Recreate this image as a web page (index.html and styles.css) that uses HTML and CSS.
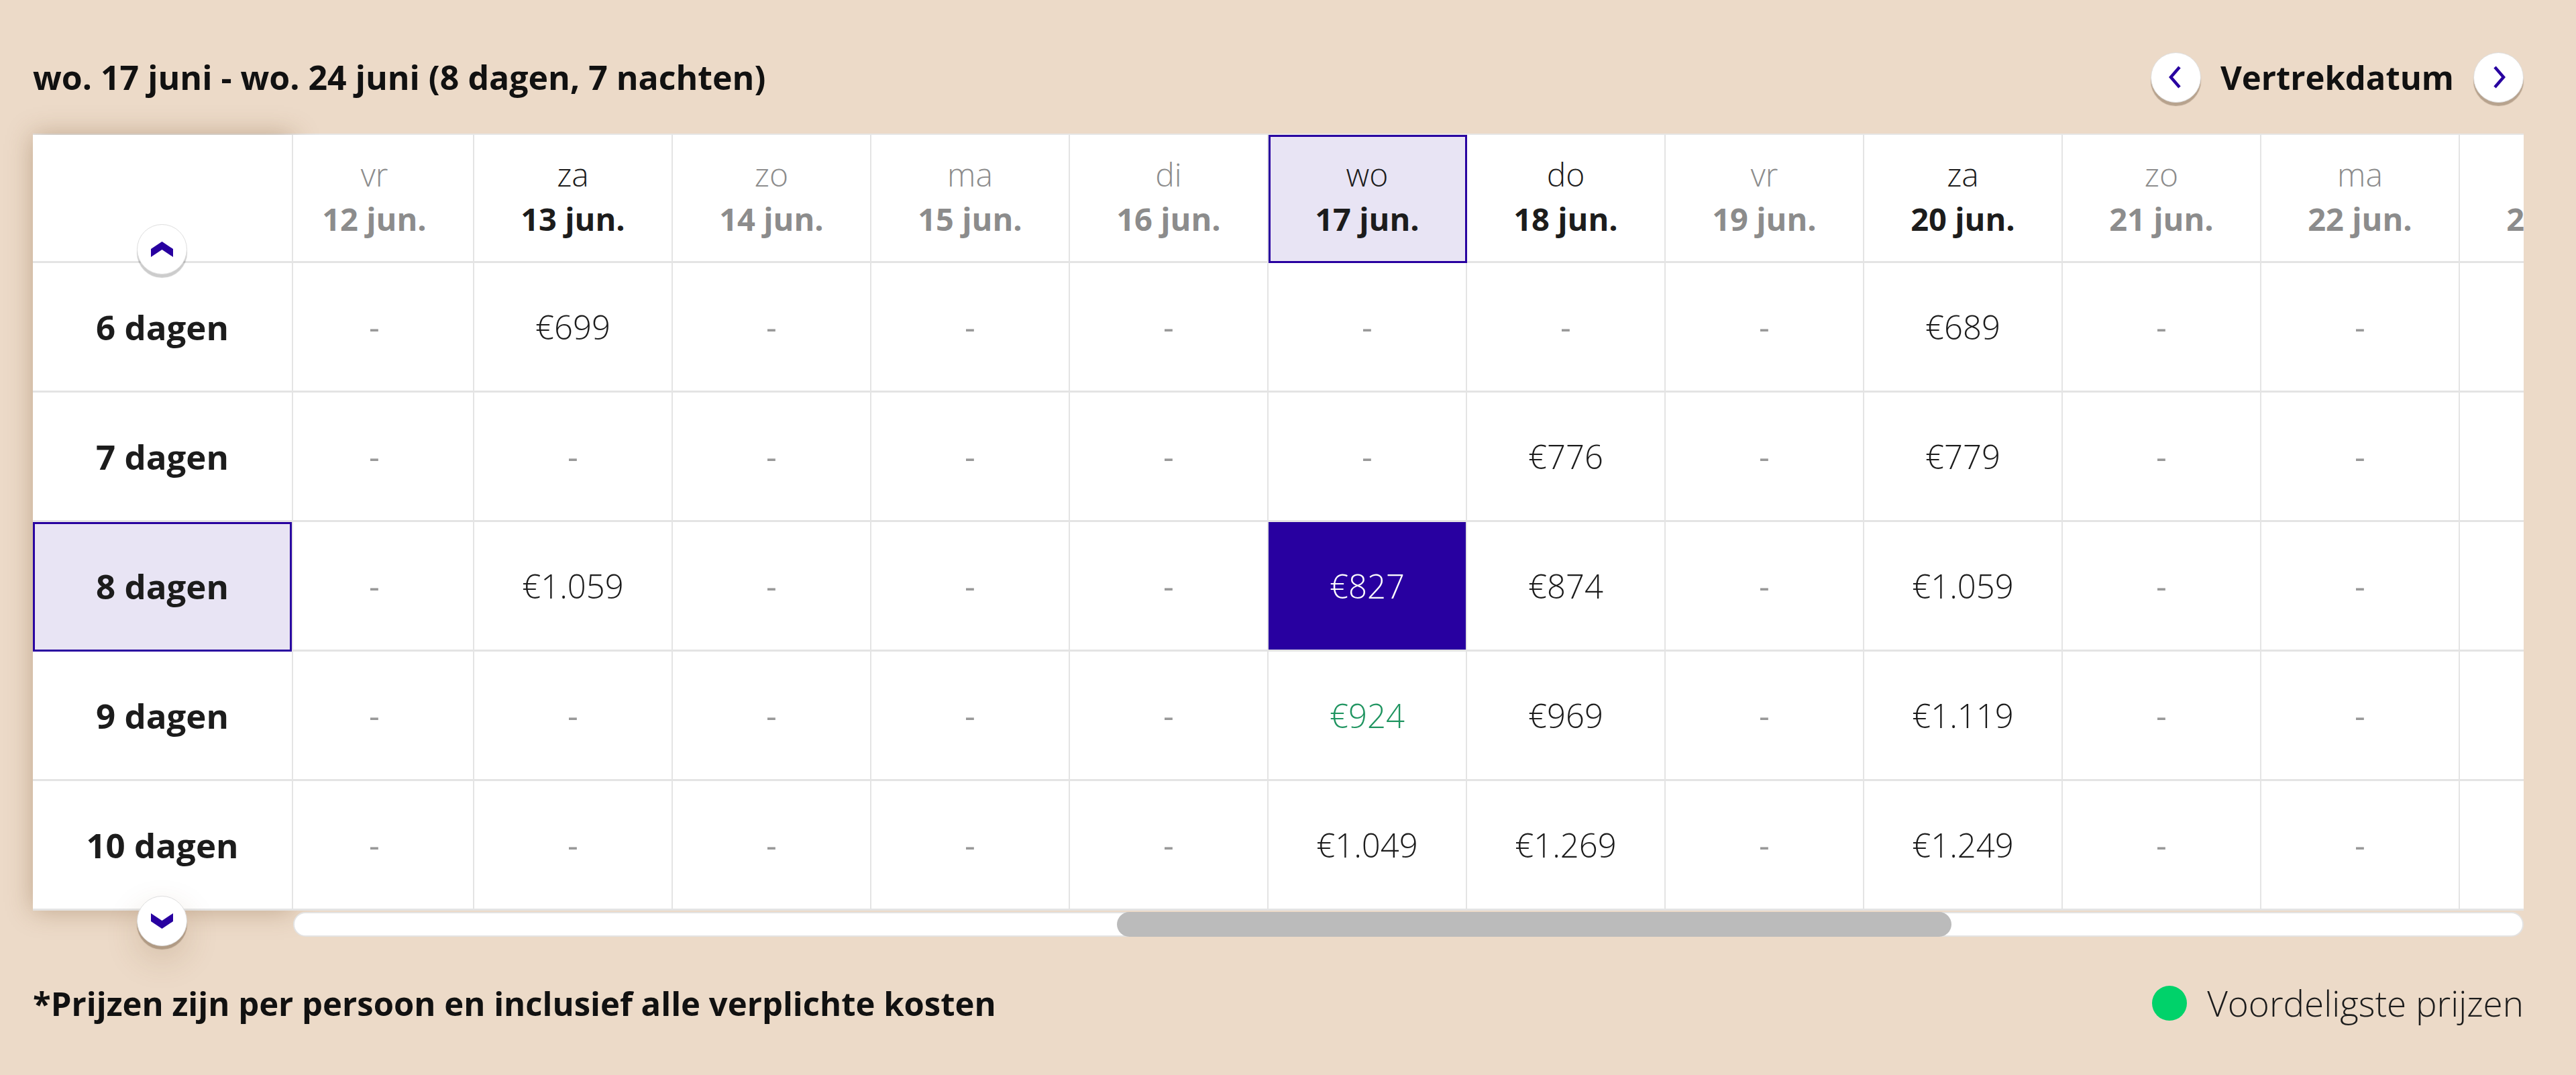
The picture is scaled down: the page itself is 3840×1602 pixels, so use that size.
FILE: index.html
```html
<!DOCTYPE html>
<html>
<head>
	<meta name="viewport" content="width=device-width initial-scale=1">
	<title>Prijsmatrix</title>
	<link rel="stylesheet" href="styles.css">
</head>
<body>
<div class="page">
	<div class="topbar">
		<h2 class="range">wo. 17 juni - wo. 24 juni (8 dagen, 7 nachten)</h2>
		<div class="datenav">
			<button class="roundbtn"><svg width="20" height="34" viewBox="0 0 20 34"><path d="M16 2 L3 17 L16 32" fill="none" stroke="#2800a0" stroke-width="4.5"/></svg></button>
			<span>Vertrekdatum</span>
			<button class="roundbtn"><svg width="20" height="34" viewBox="0 0 20 34"><path d="M4 2 L17 17 L4 32" fill="none" stroke="#2800a0" stroke-width="4.5"/></svg></button>
		</div>
	</div>

	<div class="matrix">
		<div class="labels">
			<div class="label corner"></div>
			<div class="label">6 dagen</div>
			<div class="label">7 dagen</div>
			<div class="label selected">8 dagen</div>
			<div class="label">9 dagen</div>
			<div class="label">10 dagen</div>
			<button class="roundbtn rowbtn up"><svg width="33" height="23" viewBox="0 0 33 23"><path d="M0 11 L16.5 0 L33 11 L33 23 L16.5 12 L0 23 Z" fill="#2800a0"/></svg></button>
			<button class="roundbtn rowbtn down"><svg width="33" height="23" viewBox="0 0 33 23"><path d="M0 0 L16.5 11 L33 0 L33 12 L16.5 23 L0 12 Z" fill="#2800a0"/></svg></button>
		</div>
		<div class="viewport">
			<div class="days" style="margin-left: -26px;">
				<!-- header -->
				<div class="cell head muted"><span class="dayname">vr</span><span class="date">12 jun.</span></div>
				<div class="cell head"><span class="dayname">za</span><span class="date">13 jun.</span></div>
				<div class="cell head muted"><span class="dayname">zo</span><span class="date">14 jun.</span></div>
				<div class="cell head muted"><span class="dayname">ma</span><span class="date">15 jun.</span></div>
				<div class="cell head muted"><span class="dayname">di</span><span class="date">16 jun.</span></div>
				<div class="cell head selected"><span class="dayname">wo</span><span class="date">17 jun.</span></div>
				<div class="cell head"><span class="dayname">do</span><span class="date">18 jun.</span></div>
				<div class="cell head muted"><span class="dayname">vr</span><span class="date">19 jun.</span></div>
				<div class="cell head"><span class="dayname">za</span><span class="date">20 jun.</span></div>
				<div class="cell head muted"><span class="dayname">zo</span><span class="date">21 jun.</span></div>
				<div class="cell head muted"><span class="dayname">ma</span><span class="date">22 jun.</span></div>
				<div class="cell head muted"><span class="dayname">di</span><span class="date">23 jun.</span></div>

				<!-- 6 dagen -->
				<div class="cell empty">-</div>
				<div class="cell price">€699</div>
				<div class="cell empty">-</div>
				<div class="cell empty">-</div>
				<div class="cell empty">-</div>
				<div class="cell empty">-</div>
				<div class="cell empty">-</div>
				<div class="cell empty">-</div>
				<div class="cell price">€689</div>
				<div class="cell empty">-</div>
				<div class="cell empty">-</div>
				<div class="cell empty">-</div>

				<!-- 7 dagen -->
				<div class="cell empty">-</div>
				<div class="cell empty">-</div>
				<div class="cell empty">-</div>
				<div class="cell empty">-</div>
				<div class="cell empty">-</div>
				<div class="cell empty">-</div>
				<div class="cell price">€776</div>
				<div class="cell empty">-</div>
				<div class="cell price">€779</div>
				<div class="cell empty">-</div>
				<div class="cell empty">-</div>
				<div class="cell empty">-</div>

				<!-- 8 dagen -->
				<div class="cell empty">-</div>
				<div class="cell price">€1.059</div>
				<div class="cell empty">-</div>
				<div class="cell empty">-</div>
				<div class="cell empty">-</div>
				<div class="cell price active">€827</div>
				<div class="cell price">€874</div>
				<div class="cell empty">-</div>
				<div class="cell price">€1.059</div>
				<div class="cell empty">-</div>
				<div class="cell empty">-</div>
				<div class="cell empty">-</div>

				<!-- 9 dagen -->
				<div class="cell empty">-</div>
				<div class="cell empty">-</div>
				<div class="cell empty">-</div>
				<div class="cell empty">-</div>
				<div class="cell empty">-</div>
				<div class="cell price cheap">€924</div>
				<div class="cell price">€969</div>
				<div class="cell empty">-</div>
				<div class="cell price">€1.119</div>
				<div class="cell empty">-</div>
				<div class="cell empty">-</div>
				<div class="cell empty">-</div>

				<!-- 10 dagen -->
				<div class="cell empty">-</div>
				<div class="cell empty">-</div>
				<div class="cell empty">-</div>
				<div class="cell empty">-</div>
				<div class="cell empty">-</div>
				<div class="cell price">€1.049</div>
				<div class="cell price">€1.269</div>
				<div class="cell empty">-</div>
				<div class="cell price">€1.249</div>
				<div class="cell empty">-</div>
				<div class="cell empty">-</div>
				<div class="cell empty">-</div>
			</div>
		</div>
	</div>

	<div class="scrollbar"><div class="thumb" style="left: 1226px; width: 1244px;"></div></div>

	<div class="foot">
		<p class="note">*Prijzen zijn per persoon en inclusief alle verplichte kosten</p>
		<div class="legend"><span class="dot"></span>Voordeligste prijzen</div>
	</div>
</div>
</body>
</html>
```

FILE: styles.css
```css
body{
	margin: 0;
	background-color: #ecdac8;
	font-family: 'Open Sans', 'Lato', sans-serif;
	color: #1c1c1c;
}
.page{
	padding: 77px 78px 60px 49px;
}

/* top row */
.topbar{
	display: flex;
	justify-content: space-between;
	align-items: center;
	height: 76px;
	margin-bottom: 46px;
}
.range{
	margin: 0;
	font-size: 50px;
	font-weight: 700;
	color: #111;
}
.datenav{
	display: flex;
	align-items: center;
	gap: 29px;
	font-size: 49px;
	font-weight: 700;
	color: #111;
}
.roundbtn{
	width: 75px;
	height: 75px;
	padding: 0;
	border-radius: 50%;
	border: 1px solid #dedede;
	background: white;
	box-shadow: 0 5px 1px rgba(120, 95, 70, 0.45);
	display: flex;
	align-items: center;
	justify-content: center;
}

/* matrix */
.matrix{
	display: flex;
	border-top: 2px solid #e6e6e6;
}
.labels{
	position: relative;
	flex: 0 0 386px;
	background: white;
	border-right: 2px solid #e4e4e4;
	box-shadow: 0 0 36px rgba(110, 70, 30, 0.35);
	display: grid;
	grid-template-rows: 191px repeat(5, 193px);
}
.label{
	border-bottom: 3px solid #e4e4e4;
	display: flex;
	align-items: center;
	justify-content: center;
	font-size: 51px;
	font-weight: 700;
}
.label.selected{
	background: #e8e4f4;
	outline: 3px solid #2800a0;
	outline-offset: -3px;
}
.rowbtn{
	position: absolute;
	left: calc(50% - 38px);
	box-shadow: 0 5px 1px rgba(0, 0, 0, 0.2);
}
.rowbtn.up{
	top: 133px;
}
.rowbtn.down{
	bottom: -53px;
	box-shadow: 0 5px 1px rgba(120, 95, 70, 0.45), 0 20px 50px rgba(110, 70, 30, 0.18);
}
.viewport{
	position: relative;
	flex: 1;
	overflow: hidden;
	background: white;
}
.days{
	display: grid;
	grid-template-columns: repeat(12, 296px);
	grid-template-rows: 191px repeat(5, 193px);
}
.cell{
	box-sizing: border-box;
	border-right: 2px solid #e4e4e4;
	border-bottom: 3px solid #e4e4e4;
	display: flex;
	align-items: center;
	justify-content: center;
	font-size: 49px;
	font-weight: 300;
}
.head{
	flex-direction: column;
	padding-bottom: 4px;
	color: #1c1c1c;
}
.head.muted{
	color: #8c8c8c;
}
.head.selected{
	background: #e8e4f4;
	outline: 3px solid #2800a0;
	outline-offset: -3px;
}
.dayname{
	font-size: 48px;
	font-weight: 300;
	line-height: 66px;
}
.date{
	font-size: 47px;
	font-weight: 700;
	line-height: 66px;
}
.empty{
	color: #999;
	font-weight: 400;
}
.price.active{
	background: #2800a0;
	color: white;
}
.price.cheap{
	color: #1f9460;
}

/* scroll bar under the matrix */
.scrollbar{
	position: relative;
	margin: 2px 0 0 388px;
	height: 33px;
	border: 2px solid #e3e3e3;
	border-radius: 20px;
	background: white;
}
.thumb{
	position: absolute;
	top: -2px;
	bottom: -2px;
	background: #bbbbbb;
	border-radius: 20px;
}

/* footer */
.foot{
	display: flex;
	justify-content: space-between;
	align-items: center;
	margin-top: 62px;
}
.note{
	margin: 0;
	font-size: 49px;
	font-weight: 700;
	color: #111;
}
.legend{
	display: flex;
	align-items: center;
	gap: 30px;
	font-size: 53px;
	font-weight: 300;
}
.dot{
	width: 52px;
	height: 52px;
	border-radius: 50%;
	background: #00d26a;
}
```
